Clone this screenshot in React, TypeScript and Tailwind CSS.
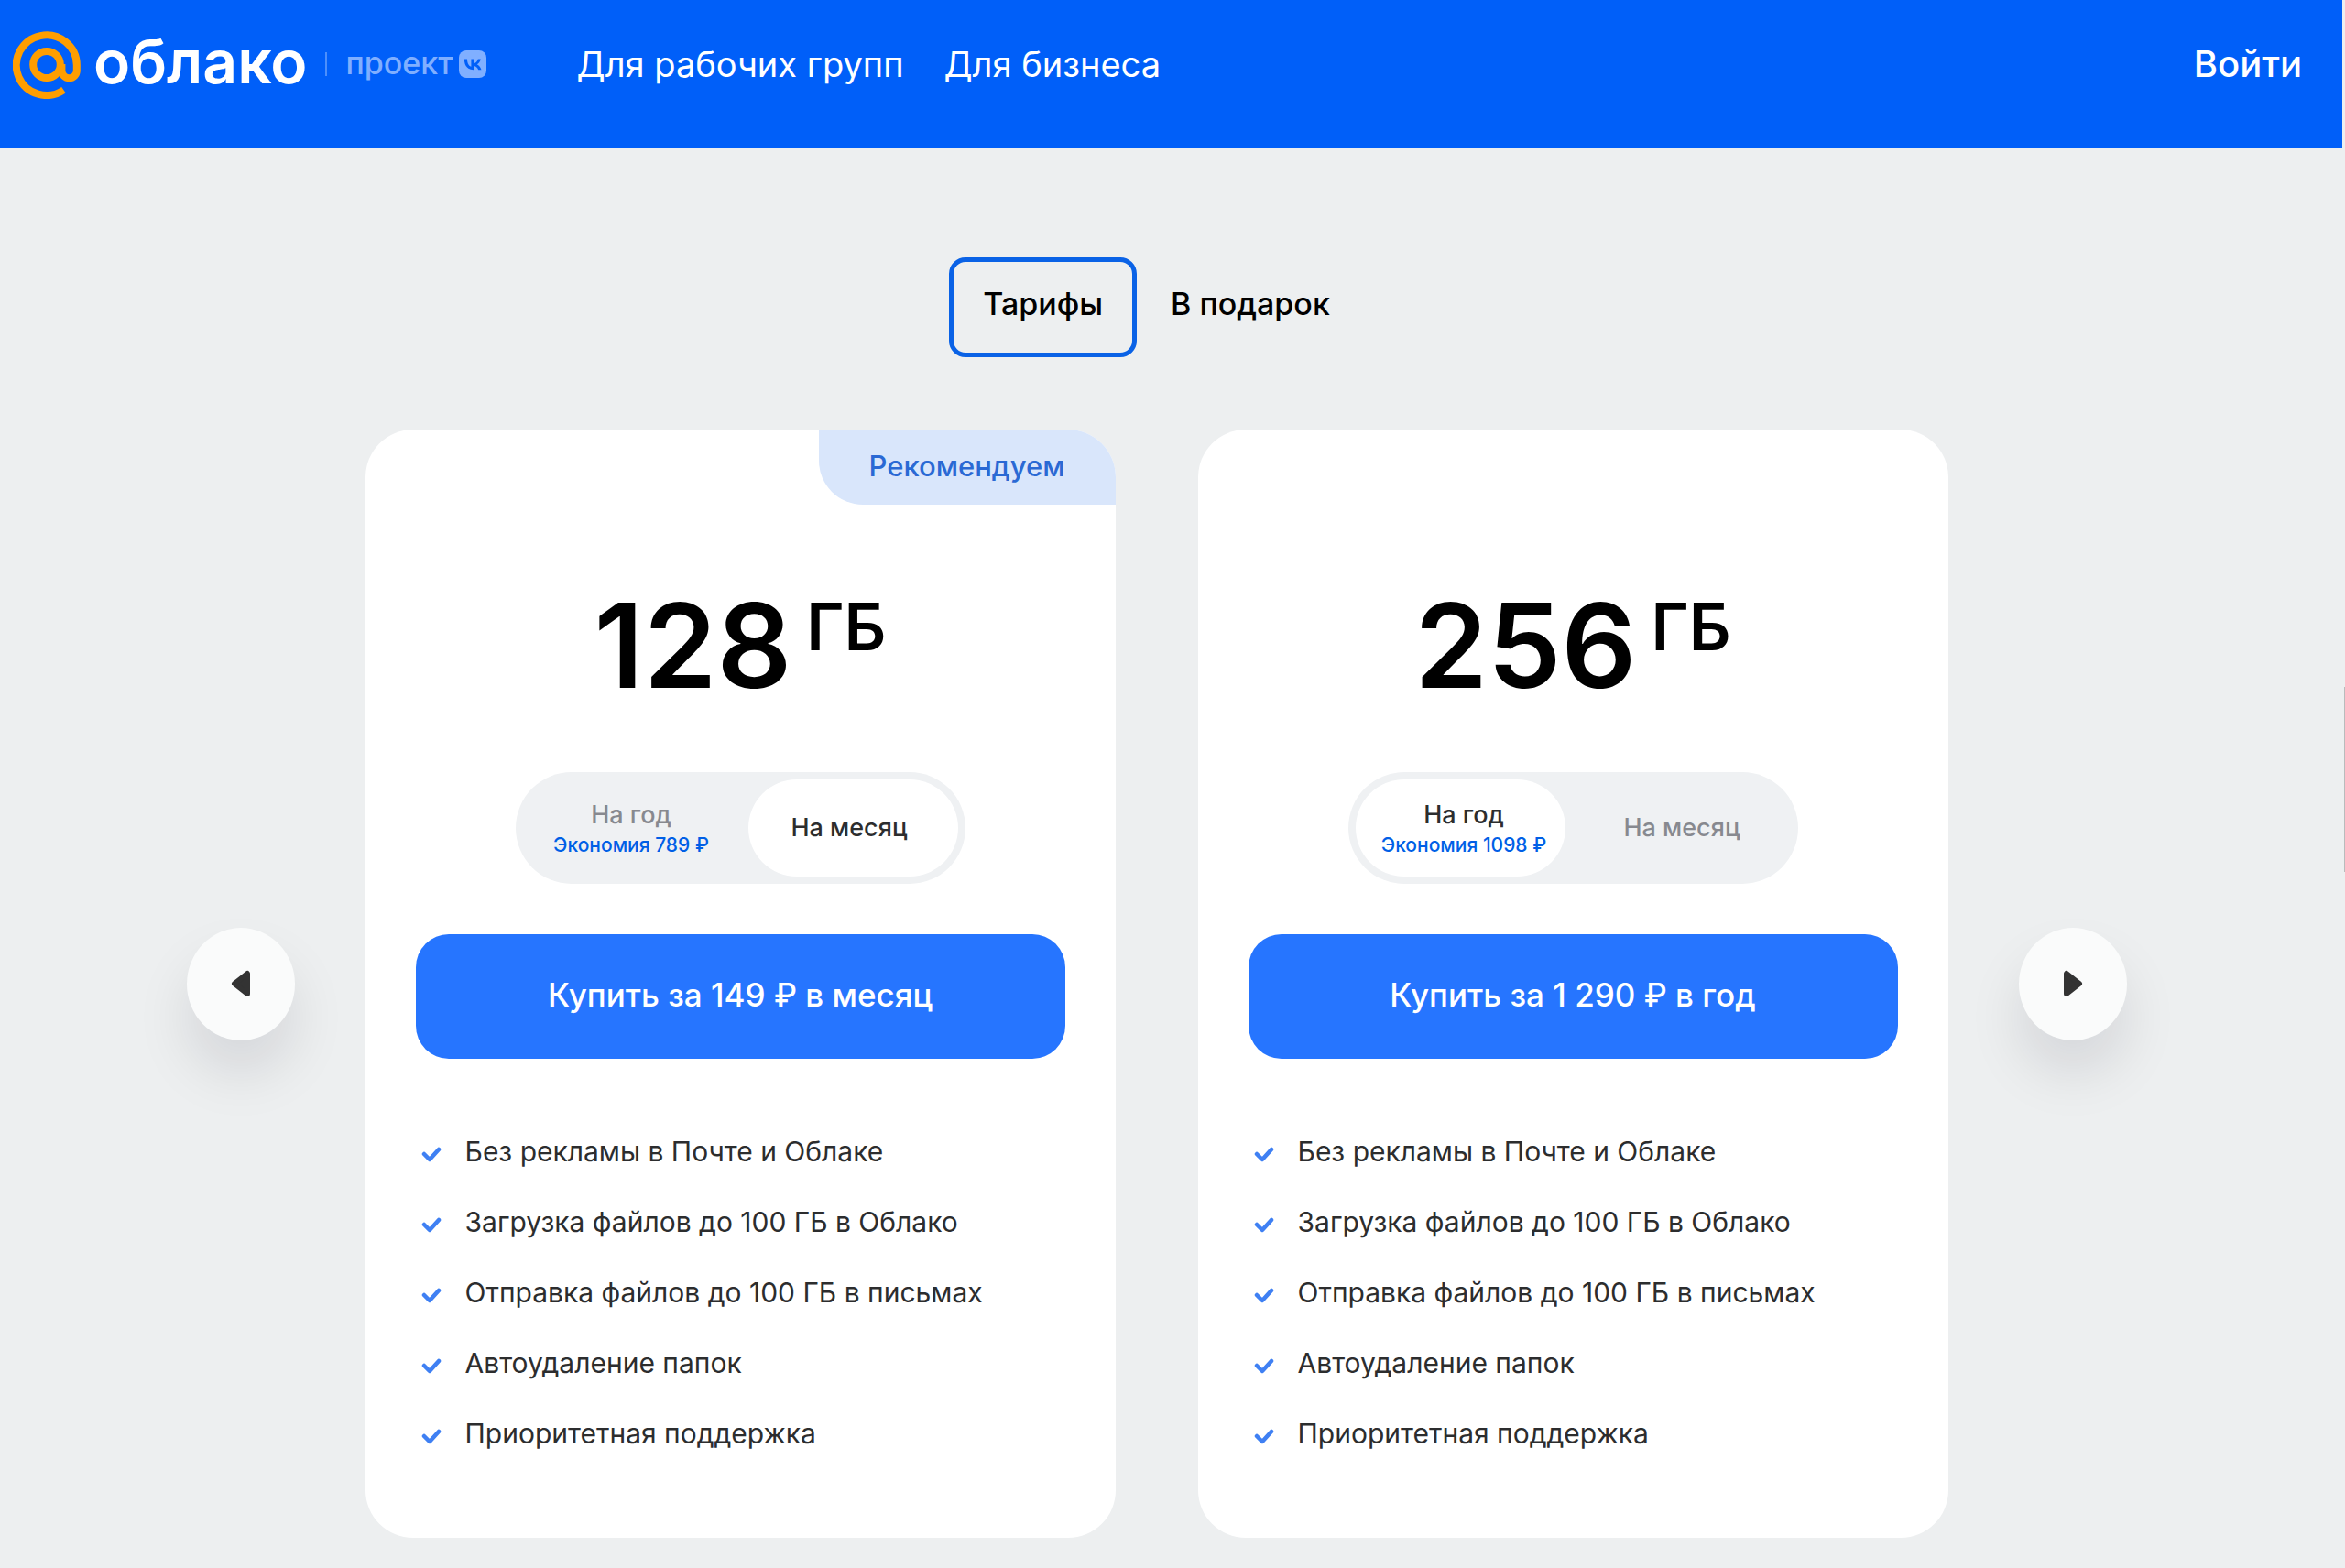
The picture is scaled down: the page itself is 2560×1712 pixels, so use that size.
import { useState } from "react";

type Period = "year" | "month";

interface Plan {
    size: number;
    economy: number;
    yearPrice: string;
    monthPrice: string;
    recommended?: boolean;
    defaultPeriod: Period;
}

const PLANS: Plan[] = [
    { size: 128, economy: 789, yearPrice: "999", monthPrice: "149", recommended: true, defaultPeriod: "month" },
    { size: 256, economy: 1098, yearPrice: "1 290", monthPrice: "199", defaultPeriod: "year" },
];

const FEATURES = [
    "Без рекламы в Почте и Облаке",
    "Загрузка файлов до 100 ГБ в Облако",
    "Отправка файлов до 100 ГБ в письмах",
    "Автоудаление папок",
    "Приоритетная поддержка",
];

function AtLogo() {
    return (
        <svg className="mt-2 h-[74px] w-[74px]" viewBox="0 0 74 74" fill="none" stroke="#ff9e00" strokeWidth="8">
            <ellipse cx="37" cy="36.5" rx="14.8" ry="14.6" />
            <path d="M55.5 64.2A33 32.8 0 1 1 69.8 37v6a8.2 8.2 0 0 1-16.4 0v-7" />
        </svg>
    );
}

function VkBadge() {
    return (
        <svg className="h-[30px] w-[30px]" viewBox="0 0 30 30">
            <rect width="30" height="30" rx="8" fill="#80afff" />
            <path
                d="M15.9 21.3C9.6 21.3 6 16.9 5.8 9.4H9c.1 5.5 2.5 7.8 4.4 8.3V9.4h3v4.7c1.8-.2 3.8-2.4 4.4-4.7h3c-.5 2.8-2.6 5-4.1 5.8 1.5.7 3.9 2.5 4.8 6.1h-3.3c-.7-2.2-2.5-3.9-4.8-4.2v4.2z"
                fill="#005ff9"
            />
        </svg>
    );
}

function Header() {
    return (
        <header className="mr-[3px] flex h-[162px] items-center bg-[#005ff9] pr-[44px] pb-[22px] pl-[14px] text-white">
            <a href="#" className="flex items-center pb-1.5">
                <AtLogo />
                <span className="ml-3.5 text-[66px] leading-[80px] font-semibold">облако</span>
                <span className="ml-5 mt-1.5 h-[26px] w-0.5 bg-[#4d8ffb]" />
                <span className="ml-5 pt-1 text-[34px] leading-[40px] font-medium text-[#80afff]">проект</span>
                <span className="ml-1.5 pt-1.5">
                    <VkBadge />
                </span>
            </a>
            <nav className="ml-[99px] flex gap-[44px] text-[38px] leading-[48px] font-normal">
                <a href="#">Для рабочих групп</a>
                <a href="#">Для бизнеса</a>
            </nav>
            <a href="#" className="ml-auto text-[40px] leading-[48px] font-medium">
                Войти
            </a>
        </header>
    );
}

function ArrowButton({ direction }: { direction: "left" | "right" }) {
    return (
        <button
            aria-label={direction === "left" ? "Назад" : "Вперёд"}
            className="flex h-[123px] w-[118px] shrink-0 items-center justify-center rounded-[50%] bg-[#fafbfb] shadow-[0_36px_60px_rgba(0,8,30,0.1)]"
        >
            <svg className="h-[30px] w-[22px]" viewBox="0 0 22 30" fill="#333" stroke="#333" strokeWidth="6" strokeLinejoin="round">
                <path d={direction === "left" ? "M18 4v22L4 15z" : "M4 4v22l14-11z"} />
            </svg>
        </button>
    );
}

function PeriodToggle({
    period,
    economy,
    onChange,
}: {
    period: Period;
    economy: number;
    onChange: (period: Period) => void;
}) {
    const active = "bg-white text-[#2c2d2e]";
    const inactive = "text-[#87898f]";

    return (
        <div className="flex h-[122px] w-[491px] justify-between rounded-full bg-[#eff1f3] p-2">
            <button
                aria-pressed={period === "year"}
                onClick={() => onChange("year")}
                className={`flex w-[229px] flex-col items-center justify-center rounded-full pt-1 pl-2 font-medium whitespace-nowrap ${period === "year" ? active : inactive}`}
            >
                <span className="text-[27px] leading-[34px]">На год</span>
                <span className="text-[21px] leading-[32px] text-[#005fe6]">Экономия {economy} ₽</span>
            </button>
            <button
                aria-pressed={period === "month"}
                onClick={() => onChange("month")}
                className={`w-[229px] rounded-full pr-2 text-[27px] leading-[34px] font-medium ${period === "month" ? active : inactive}`}
            >
                На месяц
            </button>
        </div>
    );
}

function PlanCard({ plan }: { plan: Plan }) {
    const [period, setPeriod] = useState<Period>(plan.defaultPeriod);
    const price = period === "year" ? `${plan.yearPrice} ₽ в год` : `${plan.monthPrice} ₽ в месяц`;

    return (
        <article className="relative flex w-[819px] flex-col items-center rounded-[52px] bg-white px-[55px] pt-[171px] pb-[91px]">
            {plan.recommended && (
                <div className="absolute top-0 right-0 rounded-tr-[52px] rounded-bl-[48px] bg-[#d9e6fb] px-[55px] pt-[21px] pb-[23px] text-[31px] leading-[38px] font-medium text-[#2a69d4]">
                    Рекомендуем
                </div>
            )}
            <h2 className="flex gap-4 font-semibold text-black">
                <span className="text-[128px] leading-[130px]">{plan.size}</span>
                <span className="text-[71px] leading-[88px]">ГБ</span>
            </h2>
            <div className="mt-[73px]">
                <PeriodToggle period={period} economy={plan.economy} onChange={setPeriod} />
            </div>
            <button className="mt-[55px] h-[136px] w-full rounded-[36px] bg-[#2675ff] pb-1 text-[35px] leading-[44px] font-medium text-white">
                Купить за {price}
            </button>
            <ul className="mt-[78px] flex flex-col gap-[31px] self-stretch pl-1.5 text-[30px] leading-[46px] font-normal text-[#2c2d2e]">
                {FEATURES.map((feature) => (
                    <li key={feature} className="flex items-center gap-[26px]">
                        <svg className="h-6 w-[22px]" viewBox="0 0 22 24" fill="none" stroke="#3f80f3" strokeWidth="4.5" strokeLinecap="round" strokeLinejoin="round">
                            <path d="M3 15l6 6L19 10" />
                        </svg>
                        {feature}
                    </li>
                ))}
            </ul>
        </article>
    );
}

export default function App() {
    const [tab, setTab] = useState("Тарифы");

    return (
        <div className="relative min-h-screen bg-[#edeff0] font-['Inter',sans-serif]">
            <Header />
            <main className="flex flex-col items-center pt-[119px] pr-[35px] pb-[33px]">
                <div className="flex text-[34px] leading-[42px] font-medium text-black">
                    {["Тарифы", "В подарок"].map((name) => (
                        <button
                            key={name}
                            onClick={() => setTab(name)}
                            className={`h-[109px] rounded-[18px] border-5 px-8 pb-2 ${tab === name ? "border-[#0a62e6]" : "border-transparent"}`}
                        >
                            {name}
                        </button>
                    ))}
                </div>
                <div className="mt-[79px] flex items-center gap-[77px]">
                    <ArrowButton direction="left" />
                    <div className="flex gap-[90px]">
                        {PLANS.map((plan) => (
                            <PlanCard key={plan.size} plan={plan} />
                        ))}
                    </div>
                    <ArrowButton direction="right" />
                </div>
            </main>
            {/* Thin scroll thumb over the right edge */}
            <div className="absolute top-[750px] right-0 h-[202px] w-px bg-[#b9bbbc]" />
        </div>
    );
}
